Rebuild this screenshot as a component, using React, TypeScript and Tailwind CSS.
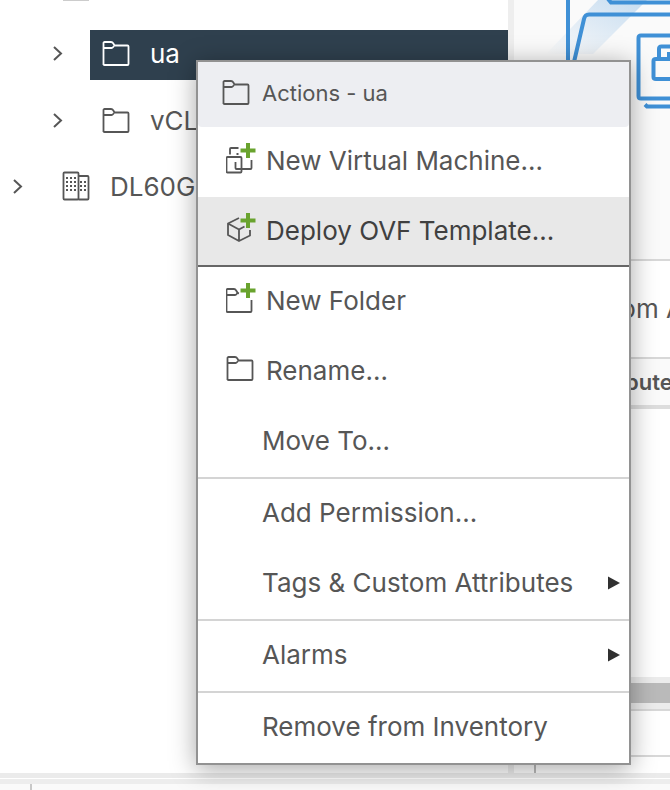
import type { ReactNode } from "react";

const FONT = "font-['Inter','Liberation_Sans',sans-serif]";

function Folder({ className = "" }: { className?: string }) {
  return (
    <svg className={`h-7 w-7 shrink-0 ${className}`} viewBox="0 0 28 28" fill="none" stroke="currentColor" strokeWidth="1.800" strokeLinejoin="round" aria-hidden="true">
      <path d="M1.500 25V3a1 1 0 0 1 1-1H9c1 0 1.700.4 2.200 1.300L12.500 5.500H25.500a1 1 0 0 1 1 1V24a1 1 0 0 1-1 1h-23a1 1 0 0 1-1-1" />
      <path d="M1.500 8H9.500c1 0 1.500-.8 2.500-2" />
    </svg>
  );
}

function Plus() {
  return <path d="M22 0v15M14.500 7.500h15" stroke="#69a32e" strokeWidth="4" />;
}

function Vm() {
  return (
    <svg className="h-8 w-8 shrink-0" viewBox="0 0 32 32" fill="none" stroke="currentColor" strokeWidth="1.800" aria-hidden="true">
      <rect x="0.500" y="14" width="15" height="15.500" rx="1" />
      <path d="M4 11.500V6a1 1 0 0 1 1-1h7.500M9.500 19v6a1 1 0 0 0 1 1h14a1 1 0 0 0 1-1v-8M10.500 11h2" />
      <Plus />
    </svg>
  );
}

function Cube() {
  return (
    <svg className="h-8 w-8 shrink-0" viewBox="0 0 32 32" fill="none" stroke="currentColor" strokeWidth="1.800" strokeLinejoin="round" aria-hidden="true">
      <path d="M13 5 2 10.500v11.500L13 28l11-5.500V17M2 10.500 13 16.500l5.500-3M13 16.500V28" />
      <Plus />
    </svg>
  );
}

function FolderPlus() {
  return (
    <svg className="h-8 w-8 shrink-0" viewBox="0 0 32 32" fill="none" stroke="currentColor" strokeWidth="1.800" strokeLinejoin="round" aria-hidden="true">
      <path d="M13 10.300 11.700 10 10 7.200C9.500 6.300 9 6 8 6H1.500a1 1 0 0 0-1 1v21a1 1 0 0 0 1 1h23a1 1 0 0 0 1-1V17" />
      <path d="M1 12h8c1 0 1.500-.8 2.500-2" />
      <Plus />
    </svg>
  );
}

function Building() {
  const dots = [
    [5, 7], [9, 7], [13, 7], [5, 11], [9, 11], [13, 11], [5, 15], [9, 15], [13, 15], [5, 19], [9, 19], [13, 19],
    [19, 11], [23, 11], [19, 15], [23, 15], [19, 19], [23, 19],
  ];
  return (
    <svg className="h-8 w-7 shrink-0" viewBox="0 0 28 32" fill="none" stroke="currentColor" strokeWidth="1.800" aria-hidden="true">
      <rect x="1.500" y="1.500" width="15" height="27" rx="1" />
      <path d="M16.500 5H25.500a1 1 0 0 1 1 1v21.500a1 1 0 0 1-1 1h-9" />
      {dots.map(([x, y]) => (
        <rect key={`${x}-${y}`} x={x - 1} y={y - 1} width="2" height="2" fill="currentColor" stroke="none" />
      ))}
    </svg>
  );
}

function Expand({ label }: { label: string }) {
  return (
    <button type="button" aria-label={`Expand ${label}`} className="flex h-8 w-8 shrink-0 items-center justify-center">
      <svg className="h-4 w-4" viewBox="0 0 16 16" fill="none" stroke="currentColor" strokeWidth="2" aria-hidden="true">
        <path d="m5 1 7 6.500L5 14" />
      </svg>
    </button>
  );
}

function Item({ icon, sub, selected, children }: { icon?: ReactNode; sub?: boolean; selected?: boolean; children: ReactNode }) {
  return (
    <button
      type="button"
      role="menuitem"
      className={`flex h-[70px] w-full items-center text-left ${selected ? "border-b-2 border-[#666666] bg-[#e8e8e8] text-[#404040]" : "pb-0.5"}`}
    >
      {icon ? <span className="flex w-[68px] shrink-0 pb-1 pl-7 text-[#565656]">{icon}</span> : <span className="w-16 shrink-0" />}
      <span className="flex-1 whitespace-nowrap">{children}</span>
      {sub && (
        <svg className="mr-2 h-4 w-3.5 shrink-0" viewBox="0 0 14 16" aria-hidden="true">
          <path d="M1 1.500 13 8 1 14.500Z" fill="#303030" />
        </svg>
      )}
    </button>
  );
}

function Separator() {
  return <div role="separator" className="h-0.5 bg-[#d4d4d4]" />;
}

function Illustration() {
  return (
    <svg className="h-[140px] w-[156px]" viewBox="0 0 156 140" fill="none" stroke="#3f90d6" strokeWidth="4" aria-hidden="true">
      <defs>
        <linearGradient id="beam" x1="1" y1="0" x2="0" y2="1">
          <stop offset="0" stopColor="#c6dcf0" />
          <stop offset="1" stopColor="#fafafa" />
        </linearGradient>
      </defs>
      <path d="M84 0h49L79 54H32Z" fill="url(#beam)" stroke="none" />
      <path d="M54 0v140M60 62l10-43c.8-3.500 2-4.500 5-4.500h81M94-1l3 3.500h59" />
      <path d="M156 35.500h-29c-2 0-2.500.5-2.500 2.500v58c0 2 .5 2.500 2.500 2.500h29M131 104.500l2 2h23" />
      <path d="M156 59h-14c-2 0-2.500.5-2.500 2v16c0 1.500.5 2 2.500 2h14M145 59V49c0-2 .5-2.500 2.500-2.500h8.500M155 52v7" />
    </svg>
  );
}

export default function App() {
  return (
    <div className={`relative flex min-h-screen flex-col overflow-hidden bg-white text-[26px] leading-8 text-[#565656] ${FONT}`}>
      <main className="flex flex-1">
        <nav aria-label="Inventory" className="w-[508px] shrink-0">
          <div className="ml-[63px] h-px w-[26px] bg-[#cccccc]" />
          <div className="mt-[29px] flex h-[50px] items-center pl-[41px]">
            <div className="pb-0.5"><Expand label="ua" /></div>
            <div className="ml-[17px] flex h-full flex-1 items-center bg-[#2f404e] pb-0.5 pl-3 text-white">
              <Folder />
              <span className="ml-5">ua</span>
            </div>
          </div>
          <div className="mt-4 flex h-[50px] items-center pl-[41px]">
            <Expand label="vCLS" />
            <Folder className="ml-[29px]" />
            <span className="ml-5">vCLS</span>
          </div>
          <div className="mt-4 flex h-[50px] items-center pl-px">
            <Expand label="DL60G" />
            <span className="ml-[29px] flex"><Building /></span>
            <span className="ml-5">DL60G</span>
          </div>
        </nav>
        <div className="w-1.5 shrink-0 bg-[#eeeeee]" />
        <section className="flex min-w-0 flex-1 flex-col overflow-hidden">
          <div className="h-[259px] bg-[#fafafa]"><Illustration /></div>
          <h2 className="flex h-[100px] items-center whitespace-nowrap border-y-2 border-[#d8d8d8] pl-[50px] font-normal">Custom Attributes</h2>
          <div className="flex h-[50px] items-center whitespace-nowrap border-b-4 border-[#dddddd] bg-[#fafafa] pl-[66px] text-[22px] font-semibold">Attribute</div>
          <div className="h-[268px]" />
          <div className="h-8 border-y-6 border-[#ececec] bg-[#bababa]" />
          <div className="h-12 border-y-2 border-[#d8d8d8]" />
          <div className="ml-5 flex-1 border-l-2 border-[#bbbbbb]" />
        </section>
      </main>
      <footer className="flex h-[17px] flex-col bg-[#fafafa]">
        <div className="h-[5px] bg-[#ebebeb]" />
        <div className="h-px bg-white" />
        <div className="h-[5px] bg-[#ededed]" />
        <div className="ml-[30px] flex-1 border-l-2 border-[#c8c8c8]" />
      </footer>

      <div role="menu" aria-label="Actions - ua" className="absolute left-[196px] top-[60px] w-[435px] border-2 border-[#929292] bg-white shadow-[0_4px_24px_rgba(0,0,0,0.35)]">
        <div className="flex h-[65px] items-center rounded-b-sm bg-[#edeef2] pb-1 pl-6 text-[22px]">
          <Folder />
          <span className="ml-3">Actions - ua</span>
        </div>
        <Item icon={<Vm />}>New Virtual Machine...</Item>
        <Item icon={<Cube />} selected>Deploy OVF Template...</Item>
        <Item icon={<FolderPlus />}>New Folder</Item>
        <Item icon={<Folder />}>Rename...</Item>
        <Item>Move To...</Item>
        <Separator />
        <Item>Add Permission...</Item>
        <Item sub>Tags &amp; Custom Attributes</Item>
        <Separator />
        <Item sub>Alarms</Item>
        <Separator />
        <Item>Remove from Inventory</Item>
      </div>
    </div>
  );
}
